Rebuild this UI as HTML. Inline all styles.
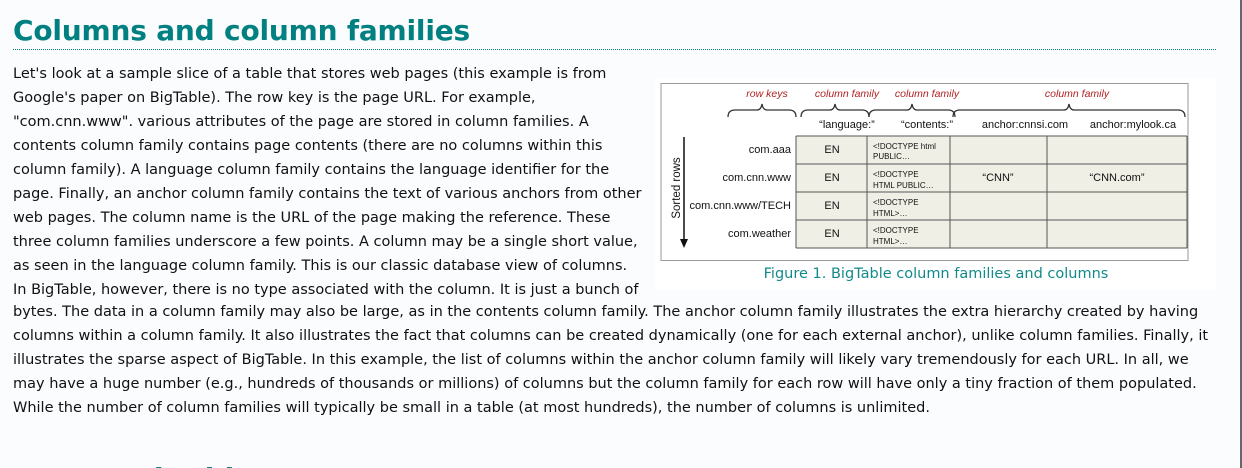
<!DOCTYPE html>
<html><head><meta charset="utf-8"><style>
html,body{margin:0;padding:0;width:1242px;height:468px;overflow:hidden;}
body{background:#fbfcfe;position:relative;font-family:"DejaVu Sans","Liberation Sans",sans-serif;}
h1{position:absolute;left:13px;top:14px;margin:0;font-size:28px;font-weight:bold;color:#008080;font-family:"DejaVu Sans",sans-serif;letter-spacing:-0.2px;white-space:nowrap;line-height:34px}
.rule{position:absolute;left:13px;top:49px;width:1203px;border-top:1px dotted #008080}
.t{position:absolute;left:13px;font-size:14.5px;color:#111;white-space:nowrap;line-height:24px}
.fig{position:absolute;left:655px;top:78px;width:561px;height:212px;background:#fff}
.edge{position:absolute;right:0;top:0;width:2px;height:468px;background:#666}
</style></head><body>
<h1>Columns and column families</h1>
<div class="rule"></div>
<div class="t" style="top:62px">Let's look at a sample slice of a table that stores web pages (this example is from</div>
<div class="t" style="top:86px">Google's paper on BigTable). The row key is the page URL. For example,</div>
<div class="t" style="top:110px">"com.cnn.www". various attributes of the page are stored in column families. A</div>
<div class="t" style="top:134px">contents column family contains page contents (there are no columns within this</div>
<div class="t" style="top:158px">column family). A language column family contains the language identifier for the</div>
<div class="t" style="top:182px">page. Finally, an anchor column family contains the text of various anchors from other</div>
<div class="t" style="top:206px">web pages. The column name is the URL of the page making the reference. These</div>
<div class="t" style="top:230px">three column families underscore a few points. A column may be a single short value,</div>
<div class="t" style="top:254px">as seen in the language column family. This is our classic database view of columns.</div>
<div class="t" style="top:278px">In BigTable, however, there is no type associated with the column. It is just a bunch of</div>
<div class="t" style="top:300px">bytes. The data in a column family may also be large, as in the contents column family. The anchor column family illustrates the extra hierarchy created by having</div>
<div class="t" style="top:324px">columns within a column family. It also illustrates the fact that columns can be created dynamically (one for each external anchor), unlike column families. Finally, it</div>
<div class="t" style="top:348px">illustrates the sparse aspect of BigTable. In this example, the list of columns within the anchor column family will likely vary tremendously for each URL. In all, we</div>
<div class="t" style="top:372px">may have a huge number (e.g., hundreds of thousands or millions) of columns but the column family for each row will have only a tiny fraction of them populated.</div>
<div class="t" style="top:396px">While the number of column families will typically be small in a table (at most hundreds), the number of columns is unlimited.</div>
<div class="fig">
<svg width="561" height="212" viewBox="655 78 561 212" xmlns="http://www.w3.org/2000/svg" font-family="Liberation Sans, sans-serif">
<rect x="661" y="83.5" width="527" height="177" fill="#fff" stroke="#999" stroke-width="1"/>
<g fill="#b22222" font-style="italic" font-size="10.5" text-anchor="middle">
<text x="767" y="97">row keys</text>
<text x="847" y="97">column family</text>
<text x="927" y="97">column family</text>
<text x="1077" y="97">column family</text>
</g>
<g fill="none" stroke="#333" stroke-width="1.3">
<path d="M728 117 q0 -7 7 -7 h22 q4 0 5 -6 q1 6 5 6 h22 q7 0 7 7"/>
<path d="M801 117 q0 -7 7 -7 h22 q4 0 5 -6 q1 6 5 6 h22 q7 0 7 7"/>
<path d="M869 117 q0 -7 7 -7 h31 q4 0 5 -6 q1 6 5 6 h31 q7 0 7 7"/>
<path d="M953 117 q0 -7 7 -7 h104 q4 0 5 -6 q1 6 5 6 h104 q7 0 7 7"/>
</g>
<g font-size="11" fill="#111" text-anchor="middle">
<text x="847" y="128">“language:”</text>
<text x="927" y="128">“contents:”</text>
<text x="1025" y="128">anchor:cnnsi.com</text>
<text x="1133" y="128">anchor:mylook.ca</text>
</g>
<rect x="796" y="136" width="391" height="112" fill="#efefe6"/>
<g stroke="#555" stroke-width="1">
<line x1="796" y1="136" x2="1187" y2="136"/>
<line x1="796" y1="164" x2="1187" y2="164"/>
<line x1="796" y1="192" x2="1187" y2="192"/>
<line x1="796" y1="220" x2="1187" y2="220"/>
<line x1="796" y1="248" x2="1187" y2="248"/>
<line x1="796" y1="136" x2="796" y2="248"/>
<line x1="867" y1="136" x2="867" y2="248"/>
<line x1="950" y1="136" x2="950" y2="248"/>
<line x1="1047" y1="136" x2="1047" y2="248"/>
<line x1="1187" y1="136" x2="1187" y2="248"/>
</g>
<g font-size="11" fill="#111" text-anchor="end">
<text x="791" y="153">com.aaa</text>
<text x="791" y="181">com.cnn.www</text>
<text x="791" y="209">com.cnn.www/TECH</text>
<text x="791" y="237">com.weather</text>
</g>
<g font-size="11" fill="#111" text-anchor="middle">
<text x="832" y="153">EN</text><text x="832" y="181">EN</text><text x="832" y="209">EN</text><text x="832" y="237">EN</text>
<text x="998" y="181">“CNN”</text><text x="1117" y="181">“CNN.com”</text>
</g>
<g font-size="8" fill="#111">
<text x="873" y="149">&lt;!DOCTYPE html</text><text x="873" y="159">PUBLIC…</text>
<text x="873" y="177">&lt;!DOCTYPE</text><text x="873" y="188">HTML PUBLIC…</text>
<text x="873" y="205">&lt;!DOCTYPE</text><text x="873" y="216">HTML&gt;…</text>
<text x="873" y="233">&lt;!DOCTYPE</text><text x="873" y="244">HTML&gt;…</text>
</g>
<text transform="translate(680,188) rotate(-90)" font-size="11.5" fill="#111" text-anchor="middle">Sorted rows</text>
<line x1="684" y1="137" x2="684" y2="243" stroke="#111" stroke-width="1.5"/>
<path d="M680 239 L684 248 L688 239 Z" fill="#111"/>
<text x="936" y="278" font-size="14.5" fill="#138a8a" text-anchor="middle" font-family="DejaVu Sans, sans-serif">Figure 1. BigTable column families and columns</text>
</svg>
</div>
<h1 style="top:462px">Rows and tablets</h1>
<div class="edge"></div>
</body></html>
